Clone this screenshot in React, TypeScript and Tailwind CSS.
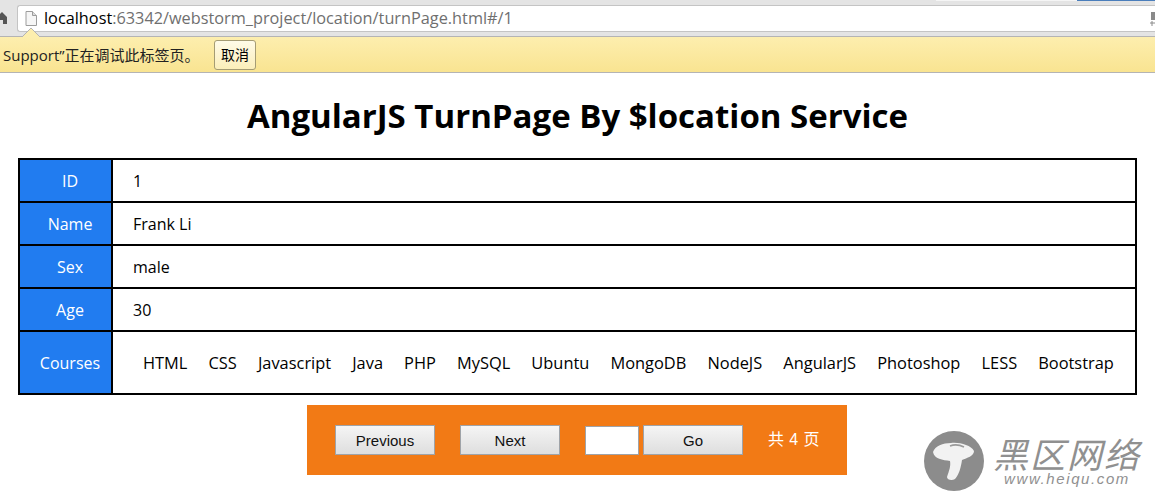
import React from "react";

const rows = [
  { label: "ID", value: "1" },
  { label: "Name", value: "Frank Li" },
  { label: "Sex", value: "male" },
  { label: "Age", value: "30" },
];

const courses = [
  "HTML", "CSS", "Javascript", "Java", "PHP", "MySQL", "Ubuntu",
  "MongoDB", "NodeJS", "AngularJS", "Photoshop", "LESS", "Bootstrap",
];

const yahei = "font-['Open_Sans','Noto_Sans_CJK_SC',sans-serif]";
const pagerBtn =
  "h-[30px] w-[100px] border border-[#9fa3a8] bg-gradient-to-b from-[#f5f5f5] to-[#dedede] text-[15px] text-[#111] pt-[2px] font-['Liberation_Sans','Noto_Sans_CJK_SC',sans-serif]";

const BrowserBar = () => (
  <div className={`h-[73px] flex flex-col ${yahei}`}>
    <div className="relative h-[37px] bg-[#e4e4e4] border-b border-[#b4b4b4] flex items-start">
      {/* tab strip remnants along the very top */}
      <div className="absolute left-[936px] top-0 h-[1px] w-[141px] bg-[#f5f5f5]" />
      <div className="absolute left-[1077px] top-0 h-[1px] w-[78px] bg-[#4a7ebb]" />
      <svg className="absolute left-[-3px] top-[11px]" width="10" height="13" viewBox="0 0 10 13">
        <path d="M0 6 L5 1 L10 6 L10 13 L6 13 L6 9 L3 9 L3 13 L0 13 Z" fill="#555" />
      </svg>
      <div className="mt-[5px] ml-[17px] flex-1 h-[27px] bg-white border border-[#c4c4c4] border-r-0 rounded-l-[3px] flex items-center">
        <svg className="ml-[7px] mr-[7px]" width="12" height="15" viewBox="0 0 12 15">
          <path d="M1 .5 H7.5 L11.5 4.5 V14.5 H1 Z" fill="#f6f6f6" stroke="#9c9c9c" />
          <path d="M7.5 .5 V4.5 H11.5" fill="#ddd" stroke="#9c9c9c" />
        </svg>
        <div className="text-[16.3px] whitespace-nowrap">
          <span className="text-black">localhost</span>
          <span className="text-[#6f6f6f]">:63342/webstorm_project/location/turnPage.html#/1</span>
        </div>
      </div>
      <svg className="absolute right-0 top-[12px]" width="5" height="15" viewBox="0 0 5 15">
        <rect x="1" y="0" width="4" height="8" fill="#8a8a8a" />
        <path d="M0 11 H5 M2 9 V14" stroke="#8a8a8a" />
      </svg>
      {/* little arrow of the info bar */}
      <svg className="absolute left-[22px] top-[28px]" width="18" height="9" viewBox="0 0 18 9">
        <path d="M0 9 L9 0 L18 9 Z" fill="#fdeeae" />
        <path d="M0 9 L9 0 L18 9" fill="none" stroke="#b4b4b4" />
      </svg>
    </div>
    <div className="flex-1 bg-gradient-to-b from-[#fdeeae] to-[#f9e491] border-b border-[#b4b4b4] flex items-center text-[15px] text-[#222] pl-[3px]">
      <span className="w-[197px] whitespace-nowrap pt-[2px]">Support”正在调试此标签页。</span>
      <button className="ml-[14px] h-[30px] w-[42px] rounded-[3px] border border-[#a59c74] bg-gradient-to-b from-[#fffbe8] to-[#fbeeb9] text-[14px] text-black">
        取消
      </button>
    </div>
  </div>
);

const Watermark = () => (
  <div className="absolute left-[923px] top-[431px] flex items-start">
    <svg width="62" height="60" viewBox="0 0 62 60">
      <circle cx="31" cy="30" r="30" fill="#8c8c8c" />
      <path d="M10 21 C12 15 20 12 28 12 C36 11 48 14 51 20 C51 25 44 27 39 29 C38 36 36 44 32 48 C29 50 24 49 24 46 C26 40 28 35 27 30 C20 29 11 28 10 21 Z" fill="#f2f2f2" />
      <path d="M27 15 C32 13 37 14 41 16" fill="none" stroke="#9a9a9a" strokeWidth="1.5" />
    </svg>
    <div className="ml-[8px] mt-[3px] flex flex-col items-center text-[#909090] font-['Noto_Sans_CJK_SC',sans-serif]">
      <div className="text-[35px] leading-[38px] italic tracking-[2px] whitespace-nowrap">黑区网络</div>
      <div className="text-[15px] leading-[14px] italic tracking-[1.6px] font-['Liberation_Sans',sans-serif] whitespace-nowrap">www.heiqu.com</div>
    </div>
  </div>
);

export default function App() {
  return (
    <div className="relative h-[496px] w-[1155px] overflow-hidden bg-white">
      <BrowserBar />

      <h1 className={`mt-[19px] h-[48px] text-center text-[33px] leading-[48px] font-bold text-black ${yahei}`}>
        AngularJS TurnPage By $location Service
      </h1>

      <div className={`mx-[18px] mt-[18px] w-[1119px] border-2 border-black text-[16px] ${yahei}`}>
        {rows.map((row) => (
          <div key={row.label} className="flex h-[43px] border-b-2 border-black">
            <div className="flex w-[93px] items-center justify-center border-r-2 border-black bg-[#217cf0] pl-[9px] text-white">
              {row.label}
            </div>
            <div className="flex items-center pl-[20px] text-black">{row.value}</div>
          </div>
        ))}
        <div className="flex h-[61px]">
          <div className="flex w-[93px] items-center justify-center border-r-2 border-black bg-[#217cf0] pl-[9px] text-white">
            Courses
          </div>
          <div className="flex flex-1 items-center justify-between pl-[30px] pr-[21px] pt-[1px] text-[16.4px] text-black">
            {courses.map((c) => (
              <span key={c}>{c}</span>
            ))}
          </div>
        </div>
      </div>

      <div className="mt-[10px] ml-[307px] flex h-[70px] w-[540px] items-center bg-[#f27a15] pl-[28px]">
        <button className={pagerBtn}>Previous</button>
        <button className={`${pagerBtn} ml-[25px]`}>Next</button>
        <input className="ml-[25px] h-[29px] w-[54px] border border-[#9fa3a8] bg-white" />
        <button className={`${pagerBtn} ml-[4px]`}>Go</button>
        <span className="ml-[25px] text-[16px] tracking-[0.4px] text-white font-['Liberation_Sans','Noto_Sans_CJK_SC',sans-serif]">共 4 页</span>
      </div>

      <Watermark />
    </div>
  );
}
